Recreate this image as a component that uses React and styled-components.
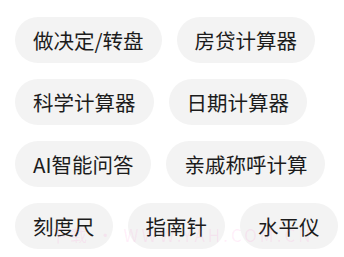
import styled, { createGlobalStyle } from "styled-components"

const GlobalStyle = createGlobalStyle`
  body {
    margin: 0;
    background: #ffffff;
    font-family: "Noto Sans CJK SC", "Noto Sans", sans-serif;
  }
`
const Page = styled.div`
  position: relative;
  width: 344px;
  height: 257px;
  overflow: hidden;
  box-sizing: border-box;
  padding: 17px 6px 0 15px;
`
const Tags = styled.div`
  display: flex;
  flex-wrap: wrap;
  column-gap: 15px;
  row-gap: 16px;
`
const Tag = styled.div`
  height: 46px;
  padding: 0 18px;
  border-radius: 23px;
  background: #f3f3f3;
  color: #1c1c1c;
  font-size: 20.5px;
  display: flex;
  align-items: center;
  white-space: nowrap;
`
const Watermark = styled.div`
  position: absolute;
  left: 50px;
  top: 222px;
  font-size: 17px;
  letter-spacing: 3px;
  color: rgba(255, 120, 210, 0.12);
  white-space: nowrap;
  pointer-events: none;
`

const tools = [
  "做决定/转盘",
  "房贷计算器",
  "科学计算器",
  "日期计算器",
  "AI智能问答",
  "亲戚称呼计算",
  "刻度尺",
  "指南针",
  "水平仪",
]

const App = () => {
  return (
    <Page>
      <GlobalStyle />
      <Tags>
        {tools.map(t => <Tag key={t}>{t}</Tag>)}
      </Tags>
      <Watermark>下载 · WWW.YAH.COM.CN</Watermark>
    </Page>
  )
}

export default App
